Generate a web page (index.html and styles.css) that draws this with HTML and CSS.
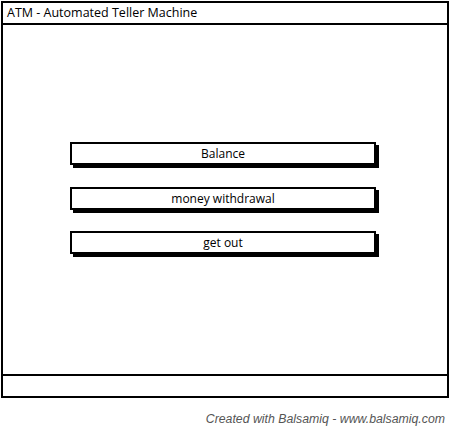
FILE: index.html
```html
<!DOCTYPE html>
<html lang="en">
<head>
  <meta charset="UTF-8" />
  <title>ATM - Automated Teller Machine</title>
  <link rel="stylesheet" href="styles.css">
</head>
<body>

<div class="window">
  <div class="titlebar">ATM - Automated Teller Machine</div>

  <div class="content">
    <div class="menu">
      <button class="button">Balance</button>
      <button class="button">money withdrawal</button>
      <button class="button">get out</button>
    </div>
  </div>

  <div class="statusbar"></div>
</div>

<div class="credit">Created with Balsamiq - www.balsamiq.com</div>

</body>
</html>
```

FILE: styles.css
```css
body {
  font-family: 'Open Sans', 'Liberation Sans', sans-serif;
  margin: 0;
  padding: 0;
  background: #fff;
  color: #000;
}

.window {
  margin: 1px 0 0 1px;
  width: 444px;
  height: 393px;
  border: 2px solid #000;
  display: flex;
  flex-direction: column;
  background: #fff;
}

.titlebar {
  height: 20px;
  border-bottom: 2px solid #000;
  font-size: 12.5px;
  line-height: 20px;
  padding-left: 4px;
}

.content {
  flex: 1;
  padding: 117px 0 0 67px;
}

.menu {
  display: flex;
  flex-direction: column;
  gap: 21.5px;
  width: 306px;
}

.button {
  height: 23px;
  width: 306px;
  border: 2px solid #000;
  background: #fff;
  box-shadow: 3px 3px 0 #000;
  font-family: inherit;
  font-size: 12px;
  color: #000;
  padding: 0;
}

.statusbar {
  height: 20px;
  border-top: 2px solid #000;
}

.credit {
  margin-top: 14px;
  width: 445px;
  text-align: right;
  font-family: 'Liberation Sans', sans-serif;
  font-style: italic;
  font-size: 12.3px;
  color: #555;
}
```
